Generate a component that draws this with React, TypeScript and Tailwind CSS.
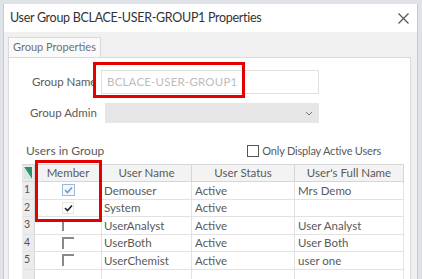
import React from "react";

const font = { fontFamily: 'Lato, "Noto Sans", Arial, sans-serif' };

function Check({ color }: { color: string }) {
  return (
    <svg width="9" height="8" viewBox="0 0 9 8">
      <path d="M1 4 L3.5 6.5 L8 1.5" fill="none" stroke={color} strokeWidth="1.6" />
    </svg>
  );
}

type Row = { n: number; user: string; status: string; full: string; member: "hover" | "checked" | "none" };

const rows: Row[] = [
  { n: 1, user: "Demouser", status: "Active", full: "Mrs Demo", member: "hover" },
  { n: 2, user: "System", status: "Active", full: "", member: "checked" },
  { n: 3, user: "UserAnalyst", status: "Active", full: "User Analyst", member: "none" },
  { n: 4, user: "UserBoth", status: "Active", full: "User Both", member: "none" },
  { n: 5, user: "UserChemist", status: "Active", full: "user one", member: "none" },
];

function MemberBox({ kind }: { kind: Row["member"] }) {
  if (kind === "hover")
    return (
      <div className="w-[13px] h-[12px] border border-[#9cb9d8] bg-[#f3f8fd] flex items-center justify-center">
        <Check color="#6f9bc8" />
      </div>
    );
  if (kind === "checked")
    return (
      <div className="w-[12px] h-[12px] border border-[#e6e6e6] bg-white flex items-center justify-center">
        <Check color="#222" />
      </div>
    );
  return <div className="w-[12px] h-[12px] border-t-2 border-l-2 border-[#8a8a8a] bg-white" />;
}

export default function App() {
  return (
    <div className="w-[422px] h-[279px] bg-[#dfe2e6] pt-[4px] pl-[3px] pr-[4px] overflow-hidden relative" style={font}>
      <div className="h-[275px] bg-[#f0f0f0] border-l border-r border-[#c9c9c9] flex flex-col">
        {/* title bar */}
        <div className="h-[28px] bg-white flex items-center justify-between pl-[6px] pr-[8px] shrink-0">
          <span className="text-[12.5px] tracking-[-0.3px] text-[#333]">User Group BCLACE-USER-GROUP1 Properties</span>
          <svg width="11" height="11" viewBox="0 0 11 11">
            <path d="M0.5 0.5 L10.5 10.5 M10.5 0.5 L0.5 10.5" stroke="#555" strokeWidth="1.2" />
          </svg>
        </div>
        {/* body */}
        <div className="flex-1 flex flex-col pl-[4px] pr-[6px] pt-[5px]">
          <div className="flex">
            <div className="h-[20px] px-[4px] bg-[#fafafa] border border-b-0 border-[#d9d9d9] flex items-center text-[11px] text-[#707070]">
              Group Properties
            </div>
          </div>
          <div className="flex-1 bg-white border border-[#dadada] flex flex-col">
            {/* group name */}
            <div className="flex items-center mt-[12px] h-[24px]">
              <span className="w-[92px] pl-[23px] text-[11.5px] text-[#5a5a5a]">Group Name</span>
              <div className="w-[218px] h-[24px] border border-[#e0e0e0] flex items-center pl-[5px] text-[11.5px] text-[#bdbdbd] tracking-[0.2px]">
                BCLACE-USER-GROUP1
              </div>
            </div>
            {/* group admin */}
            <div className="flex items-center mt-[9px] h-[20px]">
              <span className="w-[96px] pl-[21px] text-[11.5px] text-[#5a5a5a]">Group Admin</span>
              <div className="w-[214px] h-[20px] bg-[#e6e6e6] flex items-center justify-end pr-[6px]">
                <svg width="8" height="5" viewBox="0 0 8 5">
                  <path d="M1 1 L4 4 L7 1" fill="none" stroke="#777" strokeWidth="1" />
                </svg>
              </div>
            </div>
            {/* users in group */}
            <div className="flex items-center justify-between mt-[20px] h-[16px] pl-[17px] pr-[29px]">
              <span className="text-[12px] text-[#5a5a5a]">Users in Group</span>
              <div className="flex items-center gap-[3px]">
                <div className="w-[12px] h-[12px] border border-[#555] bg-white" />
                <span className="text-[11px] tracking-[-0.2px] text-[#5a5a5a]">Only Display Active Users</span>
              </div>
            </div>
            {/* table */}
            <div className="mt-[5px] ml-[13px] w-[382px] flex flex-col text-[11.5px] text-[#5a5a5a]">
              <div className="flex h-[18px] bg-[#f3f3f3] border-t border-b border-[#d6d6d6]">
                <div className="w-[13px] border-r border-[#d6d6d6] bg-[#e9e9e9] flex items-start justify-center pt-[2px]">
                  <svg width="8" height="12" viewBox="0 0 8 12">
                    <path d="M0 0 L8 0 L8 12 Z" fill="#2f8f6f" />
                    <path d="M0 0 L8 12 L0 12 Z" fill="#d5e9df" />
                  </svg>
                </div>
                <div className="w-[67px] border-r border-[#d6d6d6] flex items-center justify-center">Member</div>
                <div className="w-[90px] border-r border-[#d6d6d6] flex items-center justify-center">User Name</div>
                <div className="w-[103px] border-r border-[#d6d6d6] flex items-center justify-center">User Status</div>
                <div className="flex-1 border-r border-[#d6d6d6] flex items-center justify-center">User's Full Name</div>
              </div>
              {rows.map((r) => (
                <div key={r.n} className="flex h-[17.5px] border-b border-[#e2e2e2]">
                  <div className="w-[13px] border-r border-[#d6d6d6] bg-[#ececec] flex items-center pl-[2px] text-[10.5px] text-[#555]">
                    {r.n}
                  </div>
                  <div className="w-[67px] border-r border-[#e2e2e2] flex items-center justify-center">
                    <MemberBox kind={r.member} />
                  </div>
                  <div className="w-[90px] border-r border-[#e2e2e2] flex items-center pl-[2px]">{r.user}</div>
                  <div className="w-[103px] border-r border-[#e2e2e2] flex items-center pl-[3px]">{r.status}</div>
                  <div className="flex-1 border-r border-[#e2e2e2] flex items-center pl-[3px]">{r.full}</div>
                </div>
              ))}
              <div className="flex h-[14px]">
                <div className="w-[13px] border-r border-[#d6d6d6] bg-[#ececec]" />
                <div className="w-[67px] border-r border-[#e2e2e2]" />
                <div className="w-[90px] border-r border-[#e2e2e2]" />
                <div className="w-[103px] border-r border-[#e2e2e2]" />
                <div className="flex-1 border-r border-[#e2e2e2]" />
              </div>
            </div>
          </div>
        </div>
      </div>
      {/* red highlight boxes */}
      <div className="absolute left-[93px] top-[62px] w-[152px] h-[36px] border-[3px] border-[#e20000]" />
      <div className="absolute left-[35px] top-[160px] w-[67px] h-[62px] border-[3px] border-[#e20000]" />
    </div>
  );
}
